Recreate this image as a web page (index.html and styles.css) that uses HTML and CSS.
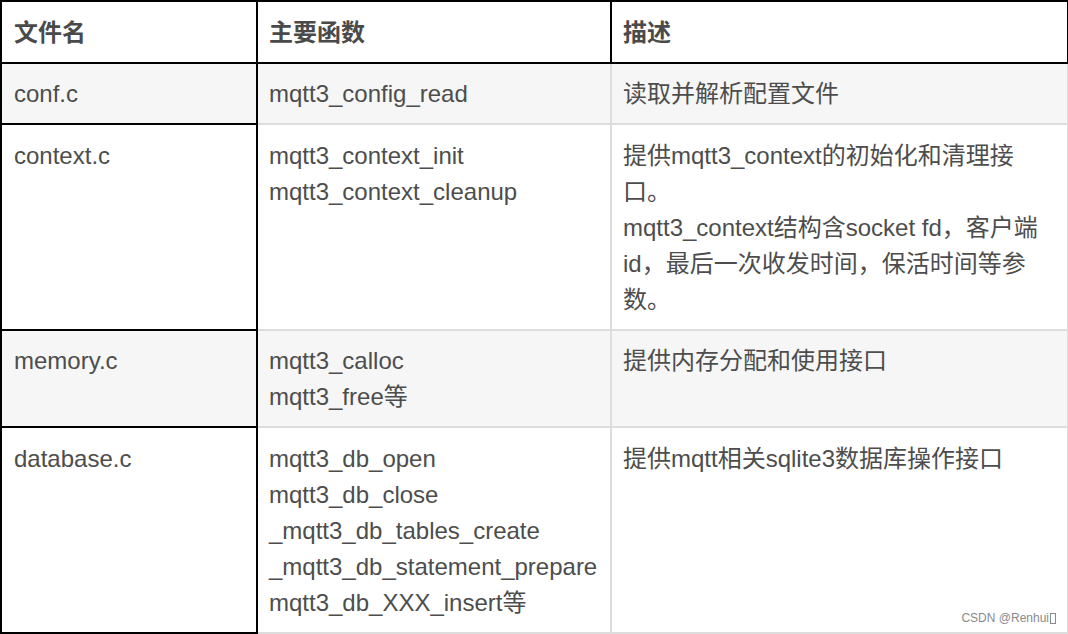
FILE: index.html
```html
<!DOCTYPE html>
<html lang="zh-CN">
<head>
<meta charset="utf-8">
<title>文件说明</title>
<link rel="stylesheet" href="styles.css">
</head>
<body>
<div class="page">
  <table class="files">
    <colgroup>
      <col class="c1">
      <col class="c2">
      <col class="c3">
    </colgroup>
    <thead>
      <tr>
        <th class="first">文件名</th>
        <th>主要函数</th>
        <th>描述</th>
      </tr>
    </thead>
    <tbody>
      <tr class="alt">
        <td class="file">conf.c</td>
        <td>mqtt3_config_read</td>
        <td>读取并解析配置文件</td>
      </tr>
      <tr>
        <td class="file">context.c</td>
        <td>mqtt3_context_init<br>mqtt3_context_cleanup</td>
        <td>提供mqtt3_context的初始化和清理接口。<br>mqtt3_context结构含socket fd，客户端id，最后一次收发时间，保活时间等参数。</td>
      </tr>
      <tr class="alt">
        <td class="file">memory.c</td>
        <td>mqtt3_calloc<br>mqtt3_free等</td>
        <td>提供内存分配和使用接口</td>
      </tr>
      <tr>
        <td class="file">database.c</td>
        <td class="funcs">mqtt3_db_open<br>mqtt3_db_close<br>_mqtt3_db_tables_create<br>_mqtt3_db_statement_prepare<br>mqtt3_db_XXX_insert等</td>
        <td>提供mqtt相关sqlite3数据库操作接口</td>
      </tr>
    </tbody>
  </table>
  <div class="watermark">CSDN @Renhui<span class="tofu"></span></div>
</div>
</body>
</html>
```

FILE: styles.css
```css
html, body {
  margin: 0;
  padding: 0;
  background: #ffffff;
}

.page {
  position: relative;
  width: 1068px;
  height: 634px;
  overflow: hidden;
}

.files {
  border-collapse: collapse;
  table-layout: fixed;
  width: 1067px;
  font-family: "Liberation Sans", "Noto Sans CJK SC", sans-serif;
  font-size: 24px;
  line-height: 36px;
  color: #4d4d4d;
}

.c1 { width: 256px; }
.c2 { width: 354px; }
.c3 { width: 457px; }

.files th,
.files td {
  padding: 12.5px 11px 11px 11px;
  text-align: left;
  vertical-align: top;
}

.files th.first,
.files td.file {
  padding-left: 12px;
}

.files td.funcs {
  white-space: nowrap;
}

.files th {
  border: 2px solid #000000;
  font-weight: bold;
  color: #4a4a4a;
  background: #ffffff;
}

.files td {
  border: 2px solid #dddddd;
}

.files td.file {
  border: 2px solid #000000;
}

.files tr.alt td {
  background: #f6f6f6;
}

.watermark {
  position: absolute;
  right: 12px;
  bottom: 9px;
  font-family: "Liberation Sans", sans-serif;
  font-size: 12px;
  line-height: 14px;
  color: #8a8a8a;
  display: flex;
  align-items: center;
}

.tofu {
  display: inline-block;
  width: 4px;
  height: 9px;
  border: 1px solid #8a8a8a;
  margin-left: 1px;
}
```
